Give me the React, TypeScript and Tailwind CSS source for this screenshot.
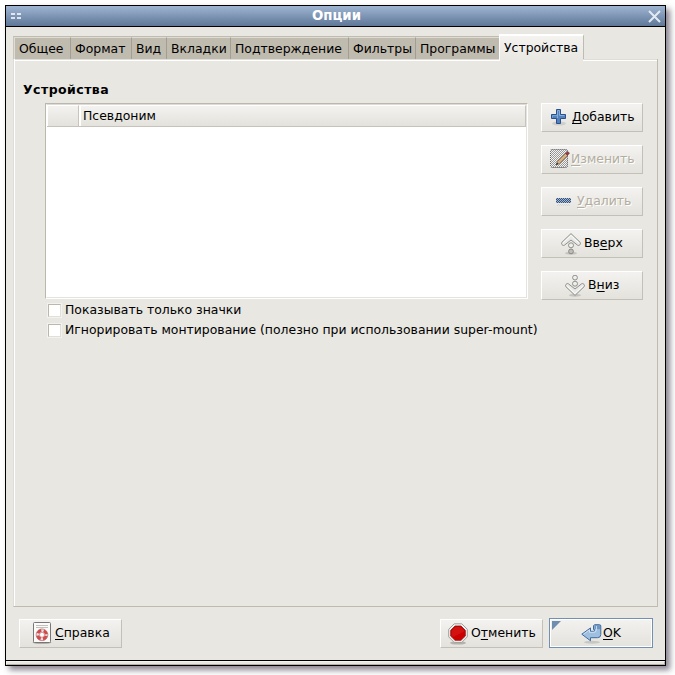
import React from "react";

type TabProps = { label: string; className: string };

function Tab({ label, className }: TabProps) {
  return (
    <div
      className={`h-[22px] shrink-0 border-t border-t-[#dfdcd3] bg-[#c0bbaf] pt-[2px] leading-[18px] ${className}`}
    >
      {label}
    </div>
  );
}

type BtnProps = {
  before?: string;
  hot: string;
  after: string;
  pad: string;
  gap: string;
  width: string;
  disabled?: boolean;
  icon: React.ReactNode;
};

function Btn({ before = "", hot, after, pad, gap, width, disabled, icon }: BtnProps) {
  return (
    <button
      className={`flex h-[29px] shrink-0 items-center border border-t-white border-l-white border-r-[#c5c0b7] border-b-[#c5c0b7] bg-linear-to-b from-[#f3f2f0] to-[#e3e2dc] ${width} ${pad} ${gap} ${
        disabled ? "text-[#b3ada0] [text-shadow:1px_1px_0_#fff]" : "text-black"
      }`}
    >
      {icon}
      <Label before={before} hot={hot} after={after} />
    </button>
  );
}

function Label({ before, hot, after }: { before: string; hot: string; after: string }) {
  return (
    <span className="mb-px block leading-[16px] whitespace-pre">
      {before}
      <span className="underline decoration-1 underline-offset-2 [text-decoration-skip-ink:none]">{hot}</span>
      {after}
    </span>
  );
}

const PlusIcon = () => (
  <svg className="mb-px h-[18px] w-[16px] shrink-0" viewBox="0 0 16 18">
    <ellipse cx="8" cy="15.5" rx="7" ry="2" fill="#000" opacity=".1" />
    <path d="M5.5 1.5h4v5h5v4h-5v5h-4v-5h-5v-4h5z" fill="#5582bd" stroke="#28508c" strokeLinejoin="round" />
    <path d="M6.5 10v-7.500h2v5h5" fill="none" stroke="#86acd9" />
    <path d="M1.5 9.5v-2h5" fill="none" stroke="#7ba3d4" />
  </svg>
);

const EditIcon = () => (
  <svg className="mb-px h-[20px] w-[20px] shrink-0" viewBox="0 0 20 20">
    <defs>
      <pattern id="stipple" width="2" height="2" patternUnits="userSpaceOnUse">
        <path d="M0 0h1v1H0zM1 1h1v1H1z" fill="#999" shapeRendering="crispEdges" />
      </pattern>
    </defs>
    <rect x="0" y="0" width="18" height="19" rx="2" fill="#f4f4f3" />
    <rect x="0" y="0" width="18" height="19" rx="2" fill="url(#stipple)" />
    <rect x=".5" y=".5" width="17" height="18" rx="2" fill="none" stroke="#666" strokeDasharray="1 1" />
    <path d="M6 16l1.500-3.500L16 4l2 2-8.500 8.500z" fill="#d8b083" stroke="#7b6248" strokeWidth=".8" />
    <path d="M6 16l1-2.500 1.500 1.500z" fill="#333" />
    <path d="M15.500 4.500l2-2 2 1.500-2 2.500z" fill="#8d3a44" stroke="#71353b" strokeWidth=".6" />
  </svg>
);

const MinusIcon = () => (
  <svg className="mb-px h-[10px] w-[16px] shrink-0" viewBox="0 0 16 10" shapeRendering="crispEdges">
    <defs>
      <pattern id="dots" width="2" height="2" patternUnits="userSpaceOnUse">
        <path d="M0 0h1v1H0zM1 1h1v1H1z" fill="#a4b7cf" />
      </pattern>
      <pattern id="shade" width="2" height="2" patternUnits="userSpaceOnUse">
        <path d="M0 0h1v1H0zM1 1h1v1H1z" fill="#d4d3cf" />
      </pattern>
    </defs>
    <rect x="0" y="2" width="15" height="5" fill="#34527e" />
    <rect x="0" y="2" width="15" height="5" fill="url(#dots)" />
    <rect x="1" y="8" width="13" height="2" fill="url(#shade)" />
  </svg>
);

const ArrowShape = ({ up }: { up: boolean }) => (
  <svg className="h-[22px] w-[20px] shrink-0" viewBox="0 0 20 22">
    <ellipse cx="10" cy="20.3" rx="6" ry="1.5" fill="#000" opacity=".14" />
    <g transform={up ? undefined : "matrix(1 0 0 -1 0 21)"} stroke="#85857f" strokeWidth=".9">
      <path
        d="M10 .6L.9 9.300c-1.300 1.300.8 4 2.500 2.900L10 7l6.600 5.200c1.700 1.100 3.800-1.600 2.500-2.900z"
        fill="#e9e9e7"
      />
      <path d="M10 2.400L2.200 9.800M10 2.400l7.800 7.400" fill="none" stroke="#fff" />
      <circle cx="10" cy="12.300" r="2.500" fill="#eee" />
      <circle cx="10" cy="18.400" r="2.400" fill={up ? "#bdbdb9" : "#efefed"} />
    </g>
  </svg>
);

const HelpIcon = () => (
  <svg className="mb-px h-[22px] w-[20px] shrink-0" viewBox="0 0 20 22">
    <ellipse cx="10" cy="20.500" rx="9.500" ry="1.300" fill="#000" opacity=".3" />
    <rect x="1.500" y=".5" width="17" height="20" rx="1" fill="#fafaf9" stroke="#777" />
    <path d="M4 3.500h12M4 5.500h12" stroke="#c0c0bc" />
    <circle cx="10" cy="12.800" r="4.300" fill="none" stroke="#e3dedd" strokeWidth="3.200" />
    <circle
      cx="10"
      cy="12.800"
      r="4.300"
      fill="none"
      stroke="#d8474b"
      strokeWidth="3"
      strokeDasharray="4.300 2.455"
      strokeDashoffset="-1.200"
    />
    <circle cx="10" cy="12.800" r="5.900" fill="none" stroke="#a95454" strokeWidth=".6" />
    <circle cx="10" cy="12.800" r="2.500" fill="#fff" stroke="#b65a5a" strokeWidth=".6" />
  </svg>
);

const StopIcon = () => (
  <svg className="h-[22px] w-[20px] shrink-0" viewBox="0 0 20 22">
    <ellipse cx="10" cy="20" rx="8" ry="1.600" fill="#000" opacity=".22" />
    <path d="M6.200.8h7.600l5.500 5.500v7.600l-5.500 5.500H6.200L.7 13.900V6.300z" fill="#f1f1ef" stroke="#a0a09b" />
    <path d="M7 3h6l4.300 4.300v5.800L13 17.300H7l-4.300-4.200V7.300z" fill="#cc0000" stroke="#8d1313" strokeWidth=".8" />
    <path d="M7.300 4h5.400l3.500 3.500v1L5 14l-1.400-1.500V7.700z" fill="#ed5555" opacity=".2" />
  </svg>
);

const ReturnIcon = () => (
  <svg className="mb-px h-[20px] w-[21px] shrink-0" viewBox="0 0 21 20">
    <ellipse cx="11" cy="18.300" rx="8" ry="1.500" fill="#000" opacity=".13" />
    <path
      d="M13.500.7h5q1.300 0 1.300 1.300V10.500q0 3.200-3.300 3.200H9.500v3.100L.8 10.200 9.500 3.900v3.400H12.500q1 0 1-1V5.500h-1V1.700z"
      fill="#9fbfe0"
      stroke="#3f6c9e"
    />
    <path d="M2.500 10.200l6-4.300v2.400h5q1.500 0 1.500-2V5" fill="none" stroke="#d9e7f5" strokeWidth=".8" />
    <path d="M13.500 1.200h5.800v4h-5.800z" fill="#4f7cae" opacity=".6" />
    <path d="M15.500 2v4.500" stroke="#c3d8ed" />
  </svg>
);

function Check({ label }: { label: string }) {
  return (
    <label className="flex h-[20px] items-center gap-[4px] whitespace-nowrap">
      <span className="h-[13px] w-[13px] shrink-0 border border-t-[#bcb7aa] border-l-[#bcb7aa] border-r-[#e1dfda] border-b-[#e1dfda] bg-white outline outline-[#f3f2ef]" />
      {label}
    </label>
  );
}

export default function App() {
  return (
    <div className="h-[675px] w-[675px] overflow-hidden bg-white pt-[5px] pl-[5px] font-['DejaVu_Sans',sans-serif] text-[12.43px] text-black select-none">
      <div className="flex h-[661px] w-[661px] flex-col border border-black bg-[#e8e7e2] shadow-[4px_4px_6px_0px_rgba(40,30,50,0.55)]">
        <header className="flex h-[21px] shrink-0 items-center justify-between border-b border-black bg-linear-to-b from-[#9fb5d2] to-[#5f7898] pr-[4px] pl-[5px]">
          <div className="grid w-[14px] grid-cols-2 gap-x-[2px] gap-y-[2px] pr-[4px]">
            <i className="h-[2px] w-[4px] bg-[#e2e8f1]" />
            <i className="h-[2px] w-[4px] bg-[#e2e8f1]" />
            <i className="h-[2px] w-[4px] bg-[#dce3ec]" />
            <i className="h-[2px] w-[4px] bg-[#dce3ec]" />
          </div>
          <h1 className="text-[13.3px] leading-[18px] font-bold text-white">Опции</h1>
          <svg className="h-[13px] w-[13px]" viewBox="0 0 13 13">
            <path d="M1 1l11 11M12 1L1 12" stroke="#e4eaf2" strokeWidth="2" />
          </svg>
        </header>

        <main className="flex h-[633px] shrink-0 flex-col pt-[7px] pl-[7px]">
          <nav className="flex h-[25px] w-[571px] items-end whitespace-nowrap">
            <div className="flex h-[23px] border-t border-l border-t-[#bfbbb1] border-l-[#c9c5bc]">
              <Tab label="Общее" className="w-[57px] border-r border-r-[#a39e91] border-l border-l-[#dfdcd3] pl-[4px]" />
              <Tab label="Формат" className="w-[61px] border-r border-r-[#a39e91] pl-[4px]" />
              <Tab label="Вид" className="w-[35px] border-r border-r-[#a39e91] pl-[4px]" />
              <Tab label="Вкладки" className="w-[64px] border-r border-r-[#a39e91] pl-[4px]" />
              <Tab label="Подтверждение" className="w-[118px] border-r border-r-[#a39e91] pl-[4px]" />
              <Tab label="Фильтры" className="w-[67px] border-r border-r-[#a39e91] pl-[4px]" />
              <Tab label="Программы" className="w-[83px] pl-[4px]" />
            </div>
            <div className="-mb-[2px] h-[27px] w-[85px] shrink-0 border-t-2 border-r border-l border-t-white border-r-[#c0bbb0] border-l-white bg-linear-to-b from-[#f4f3f0] to-[#e8e7e2] pt-[3px] pl-[4px] leading-[18px]">
              Устройства
            </div>
          </nav>
          <section className="flex h-[548px] w-[645px] border-r border-b border-l border-r-[#c0bbb0] border-b-[#bfbab0] border-l-[#dfddd7]">
            <div className="flex h-[547px] w-[643px] flex-col border-l border-l-white">
              <div className="flex h-[2px] shrink-0">
                <div className="w-[484px] border-t border-b border-t-[#dfddd7] border-b-white" />
                <div className="w-[84px]" />
                <div className="grow border-t border-b border-t-[#dfddd7] border-b-white" />
              </div>
              <h2 className="mt-[20px] ml-[8px] h-[22px] text-[12.5px] leading-[18px] font-bold tracking-[0.45px]">
                Устройства
              </h2>
              <div className="flex pl-[30px]">
                <div className="w-[483px]">
                  <div className="h-[196px] border border-t-[#bcb7aa] border-l-[#bcb7aa] border-r-white border-b-white bg-white">
                    <div className="h-[194px] border border-t-[#dedbd4] border-l-white border-r-[#e5e3de] border-b-[#e5e3de]">
                      <div className="flex h-[22px] border-b border-b-[#c7c3ba]">
                        <div className="w-[32px] border-t border-l border-r border-white border-r-[#c8c4bb] bg-linear-to-b from-[#f3f2f0] to-[#e3e2dc]" />
                        <div className="ml-px grow border-t border-l border-r border-white border-r-[#c8c4bb] bg-linear-to-b from-[#f3f2f0] to-[#e3e2dc] pl-[2px] leading-[20px]">
                          Псевдоним
                        </div>
                      </div>
                    </div>
                  </div>
                  <div className="mt-px pl-[3px]">
                    <Check label="Показывать только значки" />
                    <Check label="Игнорировать монтирование (полезно при использовании super-mount)" />
                  </div>
                </div>
                <div className="ml-[13px] flex flex-col gap-[13px]">
                  <Btn hot="Д" after="обавить" width="w-[102px]" pad="pl-[9px]" gap="gap-[5px]" icon={<PlusIcon />} />
                  <Btn hot="И" after="зменить" width="w-[102px]" pad="pl-[8px]" gap="gap-[1px]" disabled icon={<EditIcon />} />
                  <Btn hot="У" after="далить" width="w-[102px]" pad="pl-[14px]" gap="gap-[5px]" disabled icon={<MinusIcon />} />
                  <Btn before="Вв" hot="е" after="рх" width="w-[102px]" pad="pl-[19px]" gap="gap-[3px]" icon={<ArrowShape up />} />
                  <Btn before="В" hot="н" after="из" width="w-[102px]" pad="pl-[23px]" gap="gap-[3px]" icon={<ArrowShape up={false} />} />
                </div>
              </div>
            </div>
          </section>
          <footer className="mt-[11px] flex h-[30px] w-[640px] items-end pl-[6px]">
            <Btn hot="С" after="правка" width="w-[103px]" pad="pl-[12px]" gap="gap-[3px]" icon={<HelpIcon />} />
            <div className="ml-[318px]">
              <Btn before="О" hot="т" after="менить" width="w-[103px]" pad="pl-[7px]" gap="gap-[3px]" icon={<StopIcon />} />
            </div>
            <button className="ml-[6px] flex h-[30px] w-[104px] shrink-0 border border-[#7390b2] bg-linear-to-b from-[#f3f2f0] to-[#e3e2dc] outline -outline-offset-2 outline-white">
              <svg className="mt-[2px] ml-[2px] h-[9px] w-[9px] shrink-0" viewBox="0 0 9 9">
                <path d="M0 0h9L0 9z" fill="#6f8db1" />
              </svg>
              <span className="mt-[3px] ml-[20px] flex items-center gap-px">
                <ReturnIcon />
                <span className="mb-[2px]">
                  <Label before="" hot="O" after="K" />
                </span>
              </span>
            </button>
          </footer>
        </main>
        <div className="h-[5px] border-t border-black">
          <div className="h-full border border-t-[#f3f2ef] border-l-[#f3f2ef] border-r-[#b4b0a7] border-b-[#b4b0a7]" />
        </div>
      </div>
    </div>
  );
}
